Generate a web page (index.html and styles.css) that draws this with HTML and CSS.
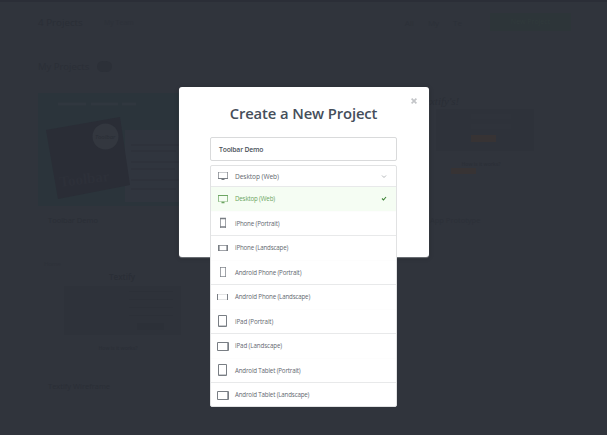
FILE: index.html
```html
<!DOCTYPE html>
<html lang="en">
<head>
<meta charset="utf-8">
<title>Create a New Project</title>
<link rel="stylesheet" href="styles.css">
</head>
<body>
<div class="page">
  <header class="topbar">
    <span class="count">4 Projects</span><span class="sub">My Team</span>
    <nav class="nav"><span>All</span><span>My</span><span>Te</span></nav>
    <span class="new-btn">New Project</span>
  </header>
  <div class="section"><span>My Projects</span><i class="badge"></i></div>
  <main class="grid">
    <article>
      <div class="thumb teal">
        <svg width="142" height="113" viewBox="0 0 142 113">
          <path d="M20 11h28M53 11h27M84 11h14" stroke="#30373f" stroke-width="3"/>
          <rect x="87" y="37" width="55" height="72" fill="#30353e"/>
          <path d="M93 52h49M93 58h45M93 69h49M93 76h44M93 87h49M93 96h45" stroke="#2d3139"/>
          <path d="M8 37L82 24 92 92 20 106z" fill="#2a2d36"/>
          <circle cx="67.500" cy="43.500" r="13" fill="#33373f"/>
          <text x="57" y="46" class="seal">Toolbar</text>
          <text x="22" y="94" class="art" transform="rotate(-7 22 94)">Toolbar</text>
        </svg>
      </div>
      <h3>Toolbar Demo</h3>
    </article>
    <article class="right-card">
      <div class="thumb">
        <div class="script-title">Textify's!</div>
        <div class="form"><i></i><i></i><b></b></div>
        <div class="how">How is it works?</div>
        <b class="orange"></b>
      </div>
      <h3>App Prototype</h3>
    </article>
    <article class="lower">
      <div class="thumb">
        <div class="tag">Home</div>
        <div class="textify">Textify</div>
        <div class="panel"><i></i><i></i><i></i><i></i><b></b></div>
        <div class="how">How is it works?</div>
      </div>
      <h3>Textify Wireframe</h3>
    </article>
  </main>
</div>

<div class="overlay">
  <section class="modal">
    <svg class="close" width="6" height="6" viewBox="0 0 6 6"><path d="M.6.6l4.800 4.800M5.400.6L.6 5.400"/></svg>
    <h1>Create a New Project</h1>
    <div class="input">Toolbar Demo</div>
    <div class="select">
      <div class="head">
        <svg class="icon" width="12" height="12" viewBox="0 0 12 12"><path d="M1.500 8V2M10.500 2v6" class="mid"/><path class="light" d="M1 2.500h10"/><path d="M1 8.500h10"/><path d="M4.500 9.500h3"/></svg>
        <span>Desktop (Web)</span>
        <svg class="mark" width="6" height="5" viewBox="0 0 6 5"><path d="M1 1.500l2 2 2-2" stroke="#b3b6b9"/></svg>
      </div>
      <ul>
        <li class="active"><svg class="icon" width="12" height="12" viewBox="0 0 12 12"><path d="M1 2.500h10"/><path d="M1.500 8.500V3M10.500 3v5.500" class="mid"/><path class="light" d="M1 8.500h10"/><path d="M4.500 9.500h3" stroke-width="1.500"/></svg><span>Desktop (Web)</span><svg class="mark" width="6" height="5" viewBox="0 0 6 5"><path d="M1 2.500l1.500 1.500L5 1" stroke="#3e8437" stroke-width="1.100"/></svg></li>
        <li><svg class="icon" width="12" height="12" viewBox="0 0 12 12"><path d="M3.500 1v10M8.500 1v10" class="mid"/><path d="M3 1.500h6M3 10h6" stroke-width="1.500"/></svg><span>iPhone (Portrait)</span></li>
        <li><svg class="icon" width="12" height="12" viewBox="0 0 12 12"><path d="M1 3.500h10M1 8.500h10" class="mid"/><path d="M1.800 3v6M10.200 3v6" stroke-width="1.600"/></svg><span>iPhone (Landscape)</span></li>
        <li><svg class="icon" width="12" height="12" viewBox="0 0 12 12"><path d="M3.500 1v10M8.500 1v10" class="mid"/><path d="M3 1.500h6M3 10.500h6" class="mid"/></svg><span>Android Phone (Portrait)</span></li>
        <li><svg class="icon" width="12" height="12" viewBox="0 0 12 12"><path d="M1 3.500h10M1 8.500h10" class="faint"/><path d="M.5 3v6M10.500 3v6"/></svg><span>Android Phone (Landscape)</span></li>
        <li><svg class="icon" width="12" height="12" viewBox="0 0 12 12"><path d="M1.500.5h8v11h-8z"/><path d="M2 10.500h7" class="light"/></svg><span class="wide">iPad (Portrait)</span></li>
        <li><svg class="icon" width="12" height="12" viewBox="0 0 12 12"><path d="M.5 2.500h11v8H.5z"/><path d="M10.500 3v7" class="mid"/></svg><span class="wide">iPad (Landscape)</span></li>
        <li><svg class="icon" width="12" height="12" viewBox="0 0 12 12"><path d="M1.500.5h8v11h-8z"/><path d="M2 10.500h7" class="light"/></svg><span>Android Tablet (Portrait)</span></li>
        <li><svg class="icon" width="12" height="12" viewBox="0 0 12 12"><path d="M.5 2.500h11v8H.5z"/><path d="M10.500 3v7" class="mid"/></svg><span>Android Tablet (Landscape)</span></li>
      </ul>
    </div>
  </section>
</div>
</body>
</html>
```
FILE: styles.css
```css
* { box-sizing: border-box; }
body {
  margin: 0;
  width: 607px;
  height: 435px;
  overflow: hidden;
  position: relative;
  background: #30343c;
  font-family: "Open Sans", sans-serif;
}
h1, h3, ul { margin: 0; padding: 0; }
ul { list-style: none; }

/* Dimmed page behind the dialog */
.page {
  height: 435px;
  border-top: 2px solid #2b2e37;
  padding: 11px 36px 0 38px;
  color: #2a2e36;
}
.topbar { display: flex; height: 18px; align-items: center; }
.count { font-size: 9.800px; width: 66px; }
.sub { font-size: 7px; color: #2d3139; }
.nav { display: flex; gap: 14px; margin-left: auto; margin-right: 28px; font-size: 8px; color: #2c3038; }
.new-btn {
  width: 81px;
  height: 18px;
  background: #2d3539;
  color: #303a3b;
  font-size: 7px;
  line-height: 18px;
  text-align: center;
}
.section { display: flex; align-items: center; gap: 8px; height: 14px; margin-top: 28px; font-size: 9.500px; color: #2b2f37; }
.badge { width: 15px; height: 11px; border-radius: 6px; background: #2c3038; }
.grid { display: grid; grid-template-columns: 142px 142px; column-gap: 240px; margin-top: 20px; }
article { height: 160px; }
article h3 { font-size: 7.500px; line-height: 12px; font-weight: 400; margin: 8px 0 0 10px; color: #2a2e36; }
.thumb { height: 113px; }
.teal { background: #2b343b; }
.teal svg { display: block; }
.seal { font: italic 6px "Open Sans", sans-serif; fill: #292d35; }
.art { font: bold 15px "Liberation Serif", serif; fill: #2d3039; }
.script-title { font: italic 11px "Liberation Serif", serif; padding-top: 2px; height: 16px; }
.form { width: 98px; height: 42px; margin-left: 16px; padding: 5px 0 0 35px; background: #2e323a; }
.form i { display: block; width: 40px; height: 5px; margin-bottom: 5px; background: #2f333b; }
.form b, .orange { display: block; width: 25px; height: 7px; background: #373334; }
.form b { margin-top: 6px; }
.how { font-size: 5px; font-weight: 600; line-height: 8px; text-align: center; color: #2b2f37; }
.right-card .how { margin-top: 9px; padding-right: 20px; }
.orange { margin-left: 31px; height: 6px; }
.right-card h3 { margin-left: 10px; color: #2c3038; }
.lower { margin-top: 2px; }
.lower .thumb { padding-top: 5px; height: 117px; }
.tag { font-size: 6px; line-height: 8px; padding-left: 6px; color: #2d3139; }
.textify { font-size: 8px; font-weight: 600; line-height: 18px; padding-left: 71px; }
.panel { width: 117px; height: 49px; margin: 0 0 9px 26px; padding: 5px 0 0 65px; background: #2e323a; }
.panel i { display: block; width: 44px; height: 1px; margin-bottom: 7px; background: #2c3038; }
.panel b { display: block; width: 27px; height: 7px; margin-left: 8px; background: #2c3038; }
.lower .how { margin-left: 18px; }

/* Dialog */
.overlay { position: absolute; inset: 0; display: flex; justify-content: center; align-items: flex-start; padding: 87px 0 0 1px; }
.modal {
  position: relative;
  width: 250px;
  height: 170px;
  padding: 0 32px 0 31px;
  background: #fff;
  border-radius: 3px;
  box-shadow: 0 1px 1px rgba(220, 222, 225, .4), 0 1px 5px rgba(0, 0, 0, .2);
}
.close { position: absolute; top: 11px; right: 12px; stroke: #c3c5c8; stroke-width: 1.700; fill: none; }
.modal h1 {
  height: 50px;
  padding-top: 15px;
  font-size: 14.800px;
  letter-spacing: -.11px;
  font-weight: 600;
  line-height: 22px;
  text-align: center;
  white-space: nowrap;
  color: #454e5a;
}
.input {
  height: 24px;
  border: 1px solid #d9dadb;
  border-radius: 2px;
  padding-left: 8px;
  font-size: 6.800px;
  letter-spacing: -.18px;
  font-weight: 600;
  line-height: 23px;
  color: #4a515a;
}
.select {
  position: absolute;
  top: 78px;
  left: 31px;
  width: 187px;
  height: 242px;
  background: #fff;
  border: 1px solid #e1e2e3;
  border-radius: 2px;
  overflow: hidden;
}
.head, li {
  display: flex;
  align-items: center;
  gap: 6px;
  padding: 0 9px 0 6px;
  white-space: nowrap;
  font-size: 6.200px;
  letter-spacing: -.17px;
  color: #63686f;
}
.head { height: 20px; font-size: 6.600px; letter-spacing: -.08px; }
li { height: 24.500px; border-top: 1px solid #fdfdfd; }
li:nth-child(odd) { border-top-color: #e8e9ea; }
.active { background: #f5fdf3; color: #6ca562; }
.wide { letter-spacing: -.1px; }
.icon { flex: none; fill: none; stroke: #797e84; stroke-width: 1; }
.active .icon { stroke: #6ca562; }
.faint { opacity: .2; }
.light { opacity: .4; }
.mid { opacity: .7; }
.mark { margin-left: auto; fill: none; stroke-width: 1; }
```
